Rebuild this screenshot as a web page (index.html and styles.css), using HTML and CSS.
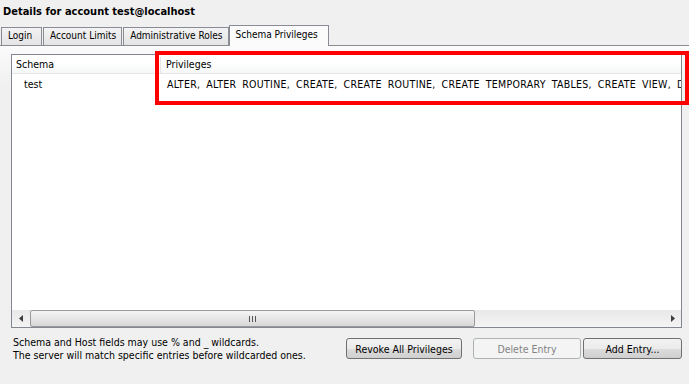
FILE: index.html
```html
<!DOCTYPE html>
<html lang="en">
<head>
    <meta charset="UTF-8">
    <title>Details for account</title>
    <link rel="stylesheet" href="styles.css">
</head>
<body>

    <div class="window">
        <!-- Title -->
        <div class="title">Details for account test@localhost</div>

        <!-- Tab Strip -->
        <div class="tab-strip">
            <span class="tab tab-login">Login</span>
            <span class="tab">Account Limits</span>
            <span class="tab">Administrative Roles</span>
            <span class="tab active">Schema Privileges</span>
        </div>

        <!-- Tab Panel -->
        <div class="tab-panel">
            <div class="list">
                <div class="list-header">
                    <span class="cell cell-schema">Schema</span>
                    <span class="cell cell-priv">Privileges</span>
                </div>
                <div class="list-body">
                    <div class="list-row">
                        <span class="cell cell-schema">test</span>
                        <span class="cell cell-priv">ALTER, ALTER ROUTINE, CREATE, CREATE ROUTINE, CREATE TEMPORARY TABLES, CREATE VIEW, DELETE, DROP, EVENT, EXECUTE, INDEX, INSERT, LOCK TABLES, REFERENCES, SELECT, SHOW VIEW, TRIGGER, UPDATE</span>
                    </div>
                </div>
                <div class="hscroll">
                    <span class="scroll-btn">
                        <svg width="4" height="7" viewBox="0 0 4 7"><path d="M4 0 L0 3.5 L4 7 Z" fill="#3c3c3c"/></svg>
                    </span>
                    <div class="scroll-track">
                        <div class="scroll-thumb">
                            <svg width="7" height="6" viewBox="0 0 7 6">
                                <rect x="0" y="0" width="1" height="6" fill="#555"/>
                                <rect x="3" y="0" width="1" height="6" fill="#555"/>
                                <rect x="6" y="0" width="1" height="6" fill="#555"/>
                            </svg>
                        </div>
                    </div>
                    <span class="scroll-btn">
                        <svg width="4" height="7" viewBox="0 0 4 7"><path d="M0 0 L4 3.5 L0 7 Z" fill="#3c3c3c"/></svg>
                    </span>
                </div>
            </div>

            <!-- Footer -->
            <div class="footer">
                <p class="hint">Schema and Host fields may use % and _ wildcards.<br>The server will match specific entries before wildcarded ones.</p>
                <div class="buttons">
                    <button class="btn btn-revoke">Revoke All Privileges</button>
                    <button class="btn btn-delete" disabled>Delete Entry</button>
                    <button class="btn btn-add">Add Entry...</button>
                </div>
            </div>
        </div>

        <!-- Red annotation box -->
        <div class="highlight"></div>
    </div>

</body>
</html>
```

FILE: styles.css
```css
/* Reset and Base Styles */
* {
    margin: 0;
    padding: 0;
    box-sizing: border-box;
}

body {
    font-family: "DejaVu Sans Condensed", "Liberation Sans", sans-serif;
    font-size: 10.5px;
    color: #000;
    background-color: #f0f0f0;
    overflow: hidden;
}

/* Window */
.window {
    position: relative;
    width: 689px;
    height: 384px;
    display: flex;
    flex-direction: column;
}

.title {
    font-size: 11px;
    font-weight: bold;
    padding: 5px 0 5px 3px;
    line-height: 14px;
    height: 24px;
}

/* Tab Strip */
.tab-strip {
    display: flex;
    align-items: flex-end;
    height: 22px;
    padding-left: 1px;
    border-bottom: 1px solid #898c95;
    font-size: 10px;
}

.tab {
    height: 18px;
    line-height: 16px;
    padding: 0 5px 0 6px;
    margin-right: 1px;
    border: 1px solid #898c95;
    border-bottom: none;
    background: linear-gradient(#f3f3f3, #e4e4e4);
    white-space: nowrap;
}

.tab-login {
    width: 41px;
}

.tab.active {
    height: 21px;
    margin-bottom: -1px;
    margin-left: -1px;
    margin-right: 0;
    width: 100px;
    line-height: 18px;
    background: #fbfbfb;
}

/* Tab Panel */
.tab-panel {
    flex: 1;
    padding: 8px 7px 0 11px;
    background: linear-gradient(#fbfbfb, #f0f0f0 40px);
}

/* List View */
.list {
    height: 274px;
    border: 1px solid #828790;
    background: #fff;
    display: flex;
    flex-direction: column;
    overflow: hidden;
}

.list-header {
    display: flex;
    height: 19px;
    border-bottom: 1px solid #e5e5e5;
    background: linear-gradient(#fff 40%, #f6f7f8);
    line-height: 15px;
    padding-top: 2px;
}

.list-header .cell-schema {
    border-right: 1px solid #e5e5e5;
}

.cell {
    white-space: nowrap;
    overflow: hidden;
    min-width: 0;
}

.cell-schema {
    width: 149px;
    flex-shrink: 0;
    padding-left: 4px;
}

.cell-priv {
    flex: 1;
    padding-left: 5px;
}

.list-body {
    flex: 1;
    overflow: hidden;
}

.list-row {
    display: flex;
    line-height: 16px;
    padding-top: 2px;
}

.list-row .cell-schema {
    padding-left: 12px;
}

.list-row .cell-priv {
    padding-left: 6px;
    letter-spacing: 0.3px;
    word-spacing: 2.6px;
}

/* Horizontal Scrollbar */
.hscroll {
    display: flex;
    height: 17px;
    flex-shrink: 0;
    background: linear-gradient(#e8e8e8, #f4f4f4);
}

.scroll-btn {
    width: 17px;
    display: flex;
    align-items: center;
    justify-content: center;
}

.scroll-track {
    flex: 1;
    padding: 0 1px;
}

.scroll-thumb {
    width: 445px;
    height: 17px;
    border: 1px solid #9a9a9a;
    border-radius: 2px;
    background: linear-gradient(#f5f5f5, #e6e6e6 50%, #d8d8d8);
    display: flex;
    align-items: center;
    justify-content: center;
}

/* Footer */
.footer {
    display: flex;
    justify-content: space-between;
    margin-top: 10px;
    padding-left: 2px;
}

.hint {
    line-height: 13px;
    margin-top: -2px;
}

.buttons {
    display: flex;
}

.btn {
    font-family: inherit;
    font-size: 10.5px;
    height: 21px;
    border: 1px solid #707070;
    border-radius: 3px;
    background: linear-gradient(#f2f2f2, #ebebeb 50%, #dddddd 50%, #cfcfcf);
    color: #000;
}

.btn-revoke {
    width: 116px;
    margin-right: 11px;
}

.btn-delete {
    width: 108px;
    margin-right: 2px;
    border-color: #adb2b5;
    background: #f4f4f4;
    color: #838383;
}

.btn-add {
    width: 99px;
}

/* Red annotation overlay */
.highlight {
    position: absolute;
    left: 155px;
    top: 51px;
    width: 534px;
    height: 54px;
    border: 4px solid #ff0000;
}
```
